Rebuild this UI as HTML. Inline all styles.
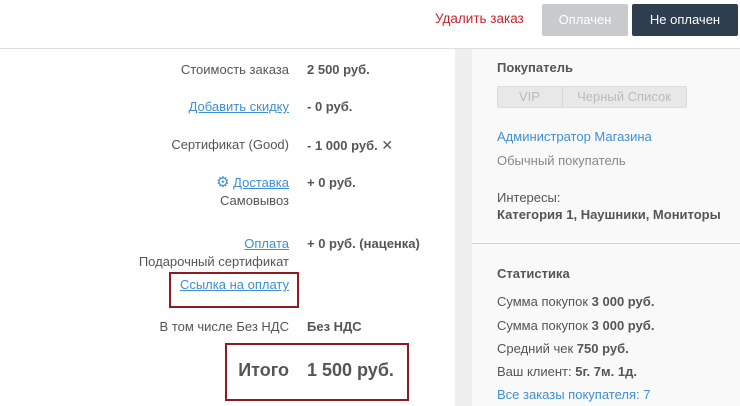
<!DOCTYPE html>
<html><head><meta charset="utf-8"><style>
body{margin:0;width:740px;height:406px;overflow:hidden;background:#fff;font-family:"Liberation Sans","DejaVu Sans",sans-serif;font-size:13px;color:#555;position:relative}
.a{position:absolute;white-space:nowrap;line-height:16px}
.r{text-align:right;right:451px}
.v{left:307px;font-weight:bold;color:#555}
.lnk{color:#3d8fd6;text-decoration:underline}
.b{font-weight:bold}
</style></head><body>
<div class="a" style="left:435px;top:11px;color:#c9242b;font-size:13.5px">Удалить заказ</div>
<div class="a" style="left:542px;top:4px;width:86px;height:32px;background:#c8cacb;border-radius:2px;color:#fff;text-align:center;line-height:32px">Оплачен</div>
<div class="a" style="left:632px;top:4px;width:106px;height:32px;background:#2e3e4e;border-radius:2px;color:#fff;text-align:center;line-height:32px">Не оплачен</div>
<div class="a" style="left:0;top:48px;width:740px;height:1px;background:#ddd"></div>
<div class="a" style="left:455px;top:49px;width:17px;height:357px;background:#eeeeee"></div>
<div class="a" style="left:472px;top:49px;width:268px;height:357px;background:#f9f9f9"></div>
<div class="a" style="left:472px;top:243px;width:268px;height:1px;background:#d5d5d5"></div>

<div class="a r" style="top:62px">Стоимость заказа</div><div class="a v" style="top:62px">2 500 руб.</div>
<div class="a r lnk" style="top:99px">Добавить скидку</div><div class="a v" style="top:99px">- 0 руб.</div>
<div class="a r" style="top:137px">Сертификат (Good)</div><div class="a v" style="top:137px">- 1 000 руб. <span style="font-size:14px">✕</span></div>
<div class="a r" style="top:175px"><span style="color:#3d8fd6;font-size:15px">⚙</span> <span class="lnk">Доставка</span></div><div class="a v" style="top:175px">+ 0 руб.</div>
<div class="a r" style="top:193px">Самовывоз</div>
<div class="a r lnk" style="top:236px">Оплата</div><div class="a v" style="top:236px">+ 0 руб. (наценка)</div>
<div class="a r" style="top:254px">Подарочный сертификат</div>
<div class="a r lnk" style="top:277px">Ссылка на оплату</div>
<div class="a" style="left:169px;top:272px;width:126px;height:32px;border:2px solid #8e1b1f"></div>
<div class="a r" style="top:319px">В том числе Без НДС</div><div class="a v" style="top:319px">Без НДС</div>
<div class="a r b" style="top:359px;font-size:18px;line-height:22px">Итого</div><div class="a v" style="top:359px;font-size:18px;line-height:22px">1 500 руб.</div>
<div class="a" style="left:225px;top:343px;width:180px;height:54px;border:2px solid #8e1b1f"></div>

<div class="a b" style="left:497px;top:60px">Покупатель</div>
<div class="a" style="left:497px;top:86px;width:188px;height:20px;border:1px solid #ddd;border-radius:2px;background:#e8e8e8"></div>
<div class="a" style="left:562px;top:87px;width:1px;height:20px;background:#d8d8d8"></div>
<div class="a" style="left:497px;top:89px;width:65px;text-align:center;color:#bbb">VIP</div>
<div class="a" style="left:563px;top:89px;width:122px;text-align:center;color:#bbb">Черный Список</div>
<div class="a" style="left:497px;top:129px;color:#3d8fd6">Администратор Магазина</div>
<div class="a" style="left:497px;top:153px;color:#888">Обычный покупатель</div>
<div class="a" style="left:497px;top:190px">Интересы:</div>
<div class="a b" style="left:497px;top:207px">Категория 1, Наушники, Мониторы</div>
<div class="a b" style="left:497px;top:266px">Статистика</div>
<div class="a" style="left:497px;top:294px">Сумма покупок <b>3 000 руб.</b></div>
<div class="a" style="left:497px;top:318px">Сумма покупок <b>3 000 руб.</b></div>
<div class="a" style="left:497px;top:341px">Средний чек <b>750 руб.</b></div>
<div class="a" style="left:497px;top:364px">Ваш клиент: <b>5г. 7м. 1д.</b></div>
<div class="a" style="left:497px;top:387px;color:#3d8fd6">Все заказы покупателя: 7</div>
</body></html>
